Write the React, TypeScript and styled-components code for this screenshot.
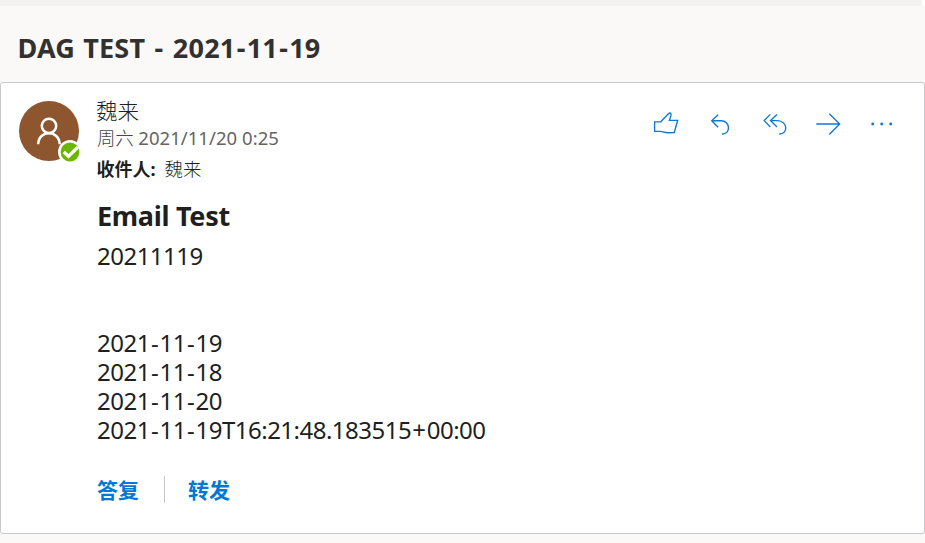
import React from 'react';
import styled, { createGlobalStyle } from 'styled-components';

const GlobalStyle = createGlobalStyle`
  * { box-sizing: border-box; }
  body {
    margin: 0;
    background: #faf9f8;
    color: #201f1e;
    font-family: 'Noto Sans', 'Noto Sans CJK SC', sans-serif;
    overflow: hidden;
  }
`;

const Page = styled.main`
  display: flex;
  flex-direction: column;
  width: 925px;
  height: 543px;
  overflow: hidden;
`;

const TopStrip = styled.div`
  flex: none;
  height: 6px;
  background: #f3f2f1;
  border-right: 3px solid #fff;
`;

const Subject = styled.h1`
  flex: none;
  margin: 0;
  height: 76px;
  padding: 22px 0 0 17.5px;
  font-size: 27px;
  line-height: 40px;
  font-weight: 700;
  letter-spacing: 0.2px;
  word-spacing: 1px;
  color: #323130;
  white-space: nowrap;
`;

const Symbol = styled.span`
  display: inline-block;
  padding: 0 1.2px;
`;

const Card = styled.article`
  flex: none;
  display: flex;
  height: 452px;
  padding: 18px 0 0 18px;
  background: #fff;
  border: 1px solid #c8c8ca;
  border-radius: 3px;
`;

const Avatar = styled.div`
  position: relative;
  flex: none;
  width: 60px;
  height: 60px;
  svg { display: block; }
`;

const Presence = styled.span`
  position: absolute;
  left: 39px;
  top: 39px;
  width: 22px;
  height: 23px;
`;

const Content = styled.div`
  flex: 1;
  display: flex;
  flex-direction: column;
  margin-left: 18px;
`;

const Header = styled.header`
  display: flex;
  justify-content: space-between;
  height: 92px;
`;

const Meta = styled.div`
  margin-top: -1px;
  white-space: nowrap;
`;

const Sender = styled.div`
  height: 24px;
  line-height: 22px;
  font-size: 21.5px;
  font-weight: 300;
  margin-left: -1px;
`;

const Sent = styled.div`
  height: 28px;
  line-height: 28px;
  font-size: 18.5px;
  letter-spacing: 0.05px;
  color: #666462;
`;

const Weekday = styled.span`
  font-weight: 300;
  letter-spacing: -0.3px;
  color: #484644;
`;

const Recipients = styled.div`
  display: flex;
  gap: 9px;
  height: 34px;
  line-height: 34px;
  font-size: 18px;
  b {
    margin-left: -0.5px;
    font-weight: 700;
  }
  span {
    font-size: 18.5px;
    font-weight: 300;
  }
`;

const Actions = styled.div`
  display: flex;
  height: 46px;
  margin-right: 14.5px;
`;

const Action = styled.button`
  display: flex;
  align-items: center;
  justify-content: center;
  width: 54px;
  padding: 0;
  border: 0;
  background: none;
  color: #0f78d4;
`;

const Heading = styled.h2`
  margin: 0;
  height: 48px;
  line-height: 45px;
  font-size: 27px;
  font-weight: 700;
  letter-spacing: -0.3px;
`;

const Line = styled.div`
  height: 29px;
  line-height: 29px;
  font-size: 24px;
  letter-spacing: -0.51px;
  white-space: nowrap;
`;

const Footer = styled.footer`
  display: flex;
  align-items: center;
  height: 28px;
  margin-top: 31px;
`;

const TextButton = styled.button`
  padding: 0;
  border: 0;
  background: none;
  color: #0078d4;
  font: 700 21px/28px 'Noto Sans CJK SC', sans-serif;
`;

const Divider = styled.span`
  width: 1px;
  height: 27px;
  margin: 0 23px 0 25px;
  background: #c8c6c4;
`;

const iconProps = {
  width: 54, height: 46, viewBox: '0 0 54 46', fill: 'none',
  stroke: 'currentColor', strokeWidth: 1.35,
};

const icons: { label: string; art: React.ReactNode }[] = [
  {
    label: '赞',
    art: <path d="M14.6 20.8H20.8L28.6 12.6Q31.2 10.8 31 14.4L29.4 19.3H37.7L34.3 31.5L27 31.7L20.6 30.3H14.6Z" />,
  },
  {
    label: '答复',
    art: <path d="M24.1 13.8L17.7 19.7L24.1 26.2M18 19.7H27.2C36.2 19.7 37.2 33.4 28 33" />,
  },
  {
    label: '全部答复',
    art: <path d="M22.3 13.4L16.2 19.6L22.3 26M29 13.4L22.5 19.6L29 26M22.8 19.6H29.5C40 19.9 40.3 33.4 31.2 33" />,
  },
  {
    label: '转发',
    art: <path d="M14.3 23H37.3M27.3 12.7L37.7 23L27.3 33.5" />,
  },
  {
    label: '更多操作',
    art: (
      <g fill="currentColor" stroke="none">
        <circle cx="16.7" cy="23" r="1.45" />
        <circle cx="25.7" cy="23" r="1.45" />
        <circle cx="34.7" cy="23" r="1.45" />
      </g>
    ),
  },
];

const bodyLines = [
  '20211119', '', '', '2021-11-19', '2021-11-18', '2021-11-20',
  '2021-11-19T16:21:48.183515+00:00',
];

function Spaced({ text }: { text: string }) {
  return (
    <>
      {text.split(/([-+])/).map((part, i) =>
        i % 2 ? <Symbol key={i}>{part}</Symbol> : part,
      )}
    </>
  );
}

export default function App() {
  return (
    <>
      <GlobalStyle />
      <Page lang="zh-CN">
        <TopStrip />
        <Subject><Spaced text="DAG TEST - 2021-11-19" /></Subject>
        <Card>
          <Avatar>
            <svg width="60" height="60" viewBox="0 0 60 60">
              <circle cx="30" cy="30" r="30" fill="#8e562e" />
              <g fill="none" stroke="#fff" strokeWidth="2.5">
                <circle cx="30" cy="24.9" r="7.2" />
                <path d="M19.2 43.2C19.5 28.6 40.3 28.6 40.7 43.2" />
              </g>
            </svg>
            <Presence>
              <svg width="22" height="23" viewBox="0 0 22 23">
                <circle cx="12" cy="12" r="12" fill="#fff" />
                <circle cx="12" cy="12" r="9.4" fill="#6bb700" />
                <path d="M5.8 12L10.5 16.2L19.8 7.3" fill="none" stroke="#fff" strokeWidth="3.3" />
              </svg>
            </Presence>
          </Avatar>
          <Content>
            <Header>
              <Meta>
                <Sender>魏来</Sender>
                <Sent><Weekday>周六</Weekday> 2021/11/20 0:25</Sent>
                <Recipients><b>收件人:</b><span>魏来</span></Recipients>
              </Meta>
              <Actions>
                {icons.map(({ label, art }) => (
                  <Action key={label} aria-label={label}>
                    <svg {...iconProps}>{art}</svg>
                  </Action>
                ))}
              </Actions>
            </Header>
            <Heading>Email Test</Heading>
            {bodyLines.map((text, i) => <Line key={i}><Spaced text={text} /></Line>)}
            <Footer>
              <TextButton>答复</TextButton>
              <Divider />
              <TextButton>转发</TextButton>
            </Footer>
          </Content>
        </Card>
      </Page>
    </>
  );
}
